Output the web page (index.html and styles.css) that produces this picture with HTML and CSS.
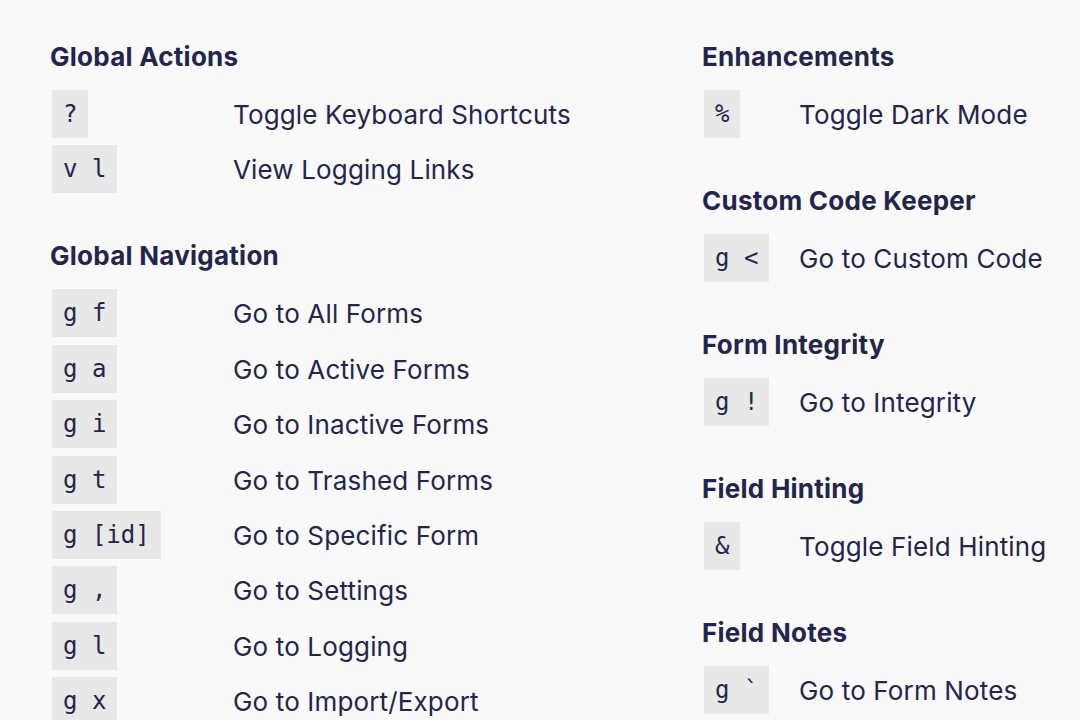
FILE: index.html
```html
<!DOCTYPE html>
<html lang="en">
<head>
<meta charset="utf-8">
<title>Keyboard Shortcuts</title>
<link rel="stylesheet" href="styles.css">
</head>
<body>
<main class="page">
  <div class="column column-left">
    <section class="group">
      <h2 class="group-title">Global Actions</h2>
      <div class="rows">
        <div class="row"><kbd class="key">?</kbd><span class="desc">Toggle Keyboard Shortcuts</span></div>
        <div class="row"><kbd class="key">v l</kbd><span class="desc">View Logging Links</span></div>
      </div>
    </section>
    <section class="group">
      <h2 class="group-title">Global Navigation</h2>
      <div class="rows">
        <div class="row"><kbd class="key">g f</kbd><span class="desc">Go to All Forms</span></div>
        <div class="row"><kbd class="key">g a</kbd><span class="desc">Go to Active Forms</span></div>
        <div class="row"><kbd class="key">g i</kbd><span class="desc">Go to Inactive Forms</span></div>
        <div class="row"><kbd class="key">g t</kbd><span class="desc">Go to Trashed Forms</span></div>
        <div class="row"><kbd class="key">g [id]</kbd><span class="desc">Go to Specific Form</span></div>
        <div class="row"><kbd class="key">g ,</kbd><span class="desc">Go to Settings</span></div>
        <div class="row"><kbd class="key">g l</kbd><span class="desc">Go to Logging</span></div>
        <div class="row"><kbd class="key">g x</kbd><span class="desc">Go to Import/Export</span></div>
      </div>
    </section>
  </div>
  <div class="column column-right">
    <section class="group">
      <h2 class="group-title">Enhancements</h2>
      <div class="rows">
        <div class="row"><kbd class="key">%</kbd><span class="desc">Toggle Dark Mode</span></div>
      </div>
    </section>
    <section class="group">
      <h2 class="group-title">Custom Code Keeper</h2>
      <div class="rows">
        <div class="row"><kbd class="key">g &lt;</kbd><span class="desc">Go to Custom Code</span></div>
      </div>
    </section>
    <section class="group">
      <h2 class="group-title">Form Integrity</h2>
      <div class="rows">
        <div class="row"><kbd class="key">g !</kbd><span class="desc">Go to Integrity</span></div>
      </div>
    </section>
    <section class="group">
      <h2 class="group-title">Field Hinting</h2>
      <div class="rows">
        <div class="row"><kbd class="key">&amp;</kbd><span class="desc">Toggle Field Hinting</span></div>
      </div>
    </section>
    <section class="group">
      <h2 class="group-title">Field Notes</h2>
      <div class="rows">
        <div class="row"><kbd class="key">g `</kbd><span class="desc">Go to Form Notes</span></div>
      </div>
    </section>
  </div>
</main>
</body>
</html>
```
FILE: styles.css
```css
* { box-sizing: border-box; }
html, body { margin: 0; padding: 0; }
body {
  background: #f9f9fa;
  color: #23264a;
  font-family: Inter, "Noto Sans", sans-serif;
  overflow: hidden;
}
.page {
  display: flex;
  padding: 41px 0 0 50px;
}
.column-left { width: 652px; }
.column-right { flex: 1; }
.column-left .row { grid-template-columns: 183px 1fr; }
.column-right .row { grid-template-columns: 97px 1fr; }
.group { margin-bottom: 47px; }
.group-title {
  margin: 0 0 17px;
  font-size: 26px;
  line-height: 32px;
  font-weight: 700;
  letter-spacing: 0.25px;
}
.rows {
  display: flex;
  flex-direction: column;
  gap: 7.4px;
}
.row {
  display: grid;
  align-items: center;
  height: 48px;
}
.key {
  justify-self: start;
  margin-left: 2px;
  background: #e8e8e8;
  font-family: "DejaVu Sans Mono", "Liberation Mono", monospace;
  font-size: 24px;
  line-height: 48px;
  height: 48px;
  padding: 0 11px;
  white-space: pre;
  color: #23264a;
}
.desc {
  font-size: 26px;
  letter-spacing: 0.15px;
  padding-top: 1px;
}
```
